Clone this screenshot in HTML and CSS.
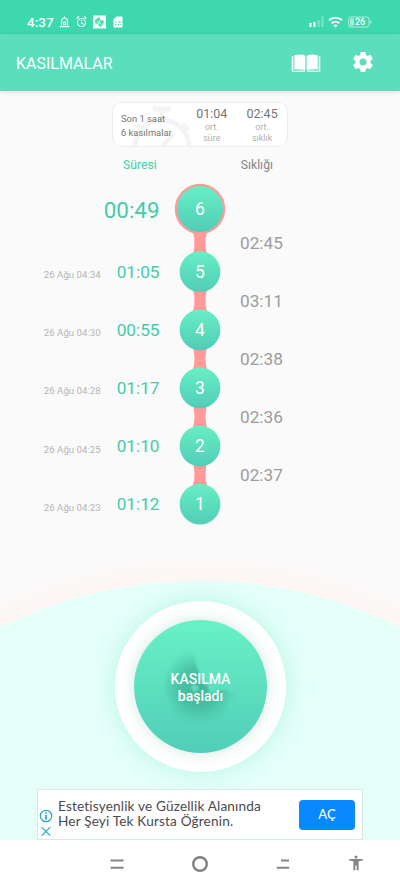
FILE: index.html
```html
<!DOCTYPE html>
<html lang="tr">
<head>
<meta charset="utf-8">
<title>Kasılmalar</title>
<link rel="stylesheet" href="styles.css">
</head>
<body>
<div class="status">
  <span class="clock">4:37</span>
  <svg class="status-left" width="68" height="16" viewBox="0 0 68 16" fill="none" stroke="#fff" stroke-width="1.2">
    <path d="M3.500 12.500V7a3 3 0 0 1 6 0v5.500M1.500 12.700h10M6.500 2.500v2M5.500 8h2v2.500h-2z"/>
    <circle cx="23.500" cy="8.500" r="4"/><path d="M23.500 6v3l1.700 1M18.500 4.500l2.500-2M28.500 4.500l-2.500-2"/>
    <path d="M35 1.500h13v13H35z" fill="#f4fffb" stroke="none"/>
    <path d="M37 6l4-3 2 3 3 1-1 4-3 2-2-3-3-1z" fill="#55d7b0" stroke="none"/><path d="M39 7l5 4M43 5l-3 5" stroke-width=".7"/>
    <path d="M58.500 2.500h5a1 1 0 0 1 1 1v9a1 1 0 0 1-1 1h-7a1 1 0 0 1-1-1v-7z" fill="#fff" stroke="none"/>
    <path d="M57 8h1.500m1.500 0h3M57 10.500h1.500m1.500 0h1m1.300 0h1" stroke="#43d6ae"/>
  </svg>
  <svg class="status-right" width="66" height="16" viewBox="0 0 66 16" fill="none" stroke="#fff">
    <path d="M2.500 9v4M6.500 8v5" stroke-width="2"/><path d="M10.700 6v7M14.500 2.500v10.500" stroke-width="2" opacity=".35"/>
    <path d="M21 6.300a9.500 9.500 0 0 1 13 0M23.700 9.300a5.500 5.500 0 0 1 7.600 0" stroke-width="2"/><path d="M25.500 11.300a3.200 3.200 0 0 1 4 0l-2 2.400z" fill="#fff" stroke="none"/>
    <rect x="40.500" y="3" width="20.500" height="10" rx="2.500" opacity=".6"/><path d="M42 4.500h4v7h-4z" fill="#fff" opacity=".55" stroke="none"/><path d="M62.700 6.500v3" opacity=".7"/>
    <text x="47" y="11.200" class="battery">26</text>
  </svg>
</div>
<header class="bar">
  <h1>KASILMALAR</h1>
  <svg class="book" width="30" height="20" viewBox="0 0 30 20" fill="#fff">
    <path d="M.7 3.200h1.600v14.500H14v1.100H.7zM29.300 3.200h-1.600v14.500H16v1.100h13.300z"/>
    <path d="M3.300 2.200Q10 .6 14.400 2.800V17Q9 15.600 3.300 16.400zM26.700 2.200Q20 .6 15.600 2.800V17Q21 15.600 26.700 16.400z"/>
    <path d="M6 17Q11 16.200 14 17.700M24 17q-5-.8-8 .7" fill="none" stroke="#fff" stroke-width=".6"/>
  </svg>
  <svg class="gear" width="24" height="24" viewBox="0 0 24 24" fill="#fff"><path d="M19.430 12.980c.04-.32.070-.64.070-.98s-.03-.66-.07-.98l2.110-1.650c.19-.15.240-.42.120-.64l-2-3.460c-.12-.22-.39-.3-.61-.22l-2.490 1c-.52-.4-1.080-.73-1.690-.98l-.38-2.650C14.460 2.180 14.250 2 14 2h-4c-.25 0-.46.180-.49.420l-.38 2.650c-.61.250-1.170.590-1.690.980l-2.490-1c-.23-.09-.49 0-.61.220l-2 3.460c-.13.220-.07.490.120.640l2.110 1.650c-.04.320-.07.650-.07.980s.03.660.070.980l-2.110 1.650c-.19.150-.24.420-.12.640l2 3.460c.12.220.390.300.610.220l2.490-1c.52.400 1.080.730 1.690.980l.38 2.650c.03.240.240.420.490.420h4c.25 0 .46-.18.490-.42l.38-2.650c.61-.25 1.170-.59 1.690-.98l2.490 1c.23.090.490 0 .61-.22l2-3.460c.12-.22.070-.49-.12-.64zM12 15.500a3.500 3.500 0 1 1 0-7 3.500 3.500 0 0 1 0 7z"/></svg>
</header>
<main>
  <section class="summary">
    <svg class="watch" width="62" height="43" viewBox="0 0 62 43" fill="none" stroke="#f4f4f4" stroke-width="5"><circle cx="31" cy="43" r="27"/><path d="M22 5h18M31 3v13M51 20l7 6M31 43l11-13M6 21l5 5"/></svg>
    <p class="period">Son 1 saat<br>6 kasılmalar</p>
    <div class="avg"><b>01:04</b><span>ort.<br>süre</span></div>
    <div class="avg"><b>02:45</b><span>ort.<br>sıklık</span></div>
  </section>
  <div class="heads"><span class="head-dur">Süresi</span><span class="head-freq">Sıklığı</span></div>
  <section class="timeline">
    <div class="durations">
      <div class="row current"><b>00:49</b></div>
      <div class="row"><i>26 Ağu 04:34</i><b>01:05</b></div>
      <div class="row"><i>26 Ağu 04:30</i><b>00:55</b></div>
      <div class="row"><i>26 Ağu 04:28</i><b>01:17</b></div>
      <div class="row"><i>26 Ağu 04:25</i><b>01:10</b></div>
      <div class="row"><i>26 Ağu 04:23</i><b>01:12</b></div>
    </div>
    <svg class="chain" width="80" height="350" viewBox="0 0 80 350">
      <defs>
        <linearGradient id="mint" x1="0" y1="0" x2="0" y2="1"><stop offset="0" stop-color="#68efc5"/><stop offset="1" stop-color="#50cdb7"/></linearGradient>
        <path id="link" d="M32.500 0Q36.500 13 32.500 26H47.500Q43.500 13 47.500 0z"/>
      </defs>
      <g fill="#ff9a98"><circle cx="40" cy="34" r="25.200"/>
        <use href="#link" y="55"/><use href="#link" y="112.500"/><use href="#link" y="170.500"/><use href="#link" y="228.500"/><use href="#link" y="286.500"/></g>
      <g fill="url(#mint)"><circle cx="40" cy="34" r="23"/><circle cx="40" cy="96.700" r="20.400"/><circle cx="40" cy="154.800" r="20.400"/><circle cx="40" cy="212.900" r="20.400"/><circle cx="40" cy="271" r="20.400"/><circle cx="40" cy="329.100" r="20.400"/></g>
      <g class="count"><text x="40" y="40.400">6</text><text x="40" y="103.200">5</text><text x="40" y="161.300">4</text><text x="40" y="219.400">3</text><text x="40" y="277.400">2</text><text x="40" y="335.400">1</text></g>
    </svg>
    <div class="intervals"><span>02:45</span><span>03:11</span><span>02:38</span><span>02:36</span><span>02:37</span></div>
  </section>
  <button class="start">
    <span class="disc">
      <svg class="shade" width="134" height="134" viewBox="0 0 134 134">
        <defs>
          <radialGradient id="dark" gradientUnits="userSpaceOnUse" cx="65" cy="67" r="40"><stop offset="0" stop-color="#309a82" stop-opacity=".6"/><stop offset=".5" stop-color="#36a28a" stop-opacity=".5"/><stop offset="1" stop-color="#45bda2" stop-opacity="0"/></radialGradient>
          <filter id="soft"><feGaussianBlur stdDeviation=".9"/></filter>
        </defs>
        <path fill="url(#dark)" filter="url(#soft)" fill-rule="evenodd" d="M55 29q6 5 7 15 1 5 3 7 1 7 3 12l6 3 1 7q5 1 10-2 4-4 18 4-1 5-9 9 1 14-6 19-22 10-44 0-10-10-7-22-8-6-7-19 3-20 25-33zM57 68l2-4 5 2 1 4-5 2z"/>
      </svg>
      <span class="label">KASILMA<br>başladı</span>
    </span>
  </button>
  <aside class="ad">
    <svg class="choices" width="14" height="34" viewBox="0 0 14 34" fill="none" stroke="#25a9c3" stroke-width="1.200"><circle cx="7" cy="10" r="5.700"/><path d="M7 9v4.500M7 6.300v1.500" stroke-width="1.800"/><path d="M2.800 21.200l8.400 8.400M11.200 21.200l-8.400 8.400"/></svg>
    <p>Estetisyenlik ve Güzellik Alanında<br>Her Şeyi Tek Kursta Öğrenin.</p>
    <a class="open">AÇ</a>
  </aside>
</main>
<nav>
  <svg width="14" height="20" viewBox="0 0 14 20" stroke="#858585" stroke-width="1.900"><path d="M.5 6.500h13M.5 13.700h13"/></svg>
  <svg width="18" height="20" viewBox="0 0 18 20" fill="none" stroke="#808080" stroke-width="2.400"><circle cx="9" cy="10" r="6.800"/></svg>
  <svg width="14" height="20" viewBox="0 0 14 20" stroke="#858585" stroke-width="1.900"><path d="M5 6.500h8M.8 13.700h12.400"/></svg>
  <svg width="14" height="20" viewBox="0 0 14 20" fill="#858585"><circle cx="7" cy="3" r="1.500"/><path d="M.3 5.100h13.400v1.500L9.600 7.200v9H7.700v-4.700H6.300v4.700H4.400v-9L.3 6.600z"/></svg>
</nav>
</body>
</html>
```

FILE: styles.css
```css
* { box-sizing: border-box; margin: 0; padding: 0; }
body { width: 400px; height: 888px; overflow: hidden; display: flex; flex-direction: column; font-family: Roboto, "Liberation Sans", sans-serif; background: #fefefe; }
svg { display: block; flex: none; }

.status { height: 34px; flex: none; background: #3dd8ae; display: flex; align-items: flex-start; padding: 14px 26px 0 27px; color: #fff; }
.clock { font-size: 13.5px; font-weight: 500; line-height: 17px; width: 31px; white-space: nowrap; }
.status-right { margin-left: auto; }
.battery { font-size: 9px; font-weight: 500; fill: #fff; stroke: none; }

.bar { height: 57px; flex: none; background: #5adebd; border-bottom: 1px solid #79cfb9; display: flex; align-items: center; padding: 0 25px 0 16px; color: #fff; box-shadow: 0 1px 5px rgba(0,0,0,.12); z-index: 1; }
.bar h1 { font-size: 16px; font-weight: 400; flex: 1; padding-top: 2px; }
.book { margin: 2px 30px 0 0; }

main { height: 749px; flex: none; display: flex; flex-direction: column; align-items: center;
  background: radial-gradient(circle at 200px 948px, #e5fff9 0 457.500px, #fdf6f4 458.500px, #fafafa 488px); }

.summary { width: 176px; height: 45px; margin-top: 11px; flex: none; border: 1px solid #eee; border-radius: 10px; background: #fff; display: flex; position: relative; padding-left: 8px; overflow: hidden; }
.watch { position: absolute; left: 18px; top: 1px; }
.period { position: relative; width: 64px; padding-top: 9px; font-size: 9.4px; line-height: 13.5px; color: #757575; white-space: nowrap; }
.avg { position: relative; width: 51px; text-align: center; padding-top: 3px; }
.avg:nth-of-type(1) { margin-left: 3.500px; }
.avg:nth-of-type(2) { margin-left: .5px; }
.avg b { display: block; font-weight: 400; font-size: 12.5px; line-height: 16px; color: #757575; }
.avg span { display: block; font-size: 8.9px; line-height: 10.5px; color: #b0b0b0; }

.heads { align-self: stretch; height: 28px; flex: none; display: flex; justify-content: space-between; padding: 10px 127px 0 123px; font-size: 12.2px; line-height: 17px; color: #858585; }
.head-dur { color: #40cfa8; }

.timeline { align-self: stretch; height: 350px; flex: none; display: grid; grid-template-columns: 160px 80px 160px; }
.row { height: 58.1px; display: flex; align-items: center; justify-content: flex-end; padding: 1px .5px 0 0; }
.row b { font-size: 17.2px; font-weight: 400; color: #46cba6; }
.row i { font-style: normal; font-size: 9.7px; color: #b5b5b5; margin-right: 16px; padding-top: 6px; }
.current { height: 67.2px; padding: 2px .5px 0 0; }
.current b { font-size: 22.4px; }
.count { font-size: 17.5px; fill: #fff; text-anchor: middle; }
.intervals { padding-top: 39px; font-size: 17.2px; color: #9c9c9c; }
.intervals span { display: block; height: 58.1px; line-height: 58.1px; }

.start { width: 171px; height: 171px; flex: none; margin-top: 75.500px; border: 0; border-radius: 50%; background: #fff; padding: 19px; font-family: inherit; box-shadow: 0 0 24px rgba(96,226,190,.33); }
.disc { width: 133px; height: 133px; display: grid; place-items: center; border-radius: 50%; background: linear-gradient(#69f1c6, #50ceb8); box-shadow: 0 0 15px rgba(70,170,145,.25); }
.shade, .label { grid-area: 1 / 1; }
.label { color: #fff; font-size: 14px; font-weight: 500; line-height: 16.5px; padding-top: 2px; z-index: 1; }

.ad { width: 326px; height: 51px; flex: none; margin-top: auto; background: #fefefe; border: 1px solid #d5ebe6; display: flex; align-items: center; padding: 0 7px 0 1px; }
.choices { margin-top: 17px; }
.ad p { flex: 1; margin: -1px 0 0 5px; font-family: Lato, sans-serif; font-size: 13.6px; line-height: 14.8px; letter-spacing: .17px; font-variant-ligatures: none; color: #4b4b4d; white-space: nowrap; }
.open { width: 56px; height: 30px; border-radius: 4px; background: #0788fc; color: #fff; font: 500 13px/29px Lato, sans-serif; text-align: center; }

nav { height: 48px; flex: none; background: #fefefe; display: grid; grid-template-columns: 84px 82px 73px auto; align-items: center; padding: 0 0 0 110px; }
nav svg:nth-child(2) { margin-left: -3px; }
nav svg:nth-child(4) { margin-left: -.5px; }
```
